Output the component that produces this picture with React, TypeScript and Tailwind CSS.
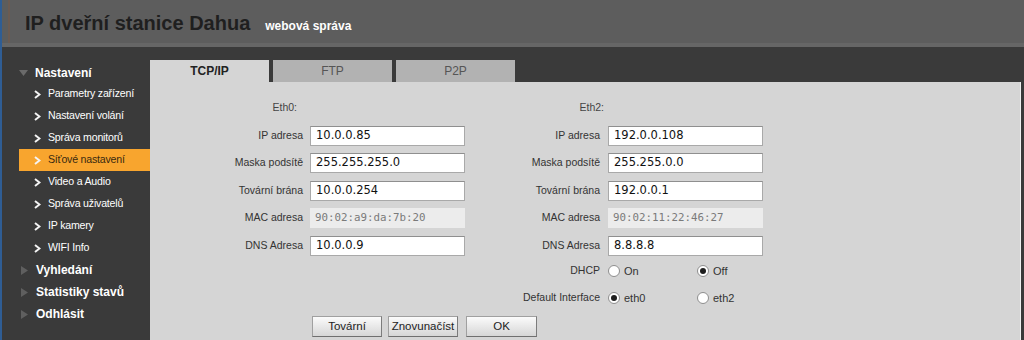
import React from "react";

type Field = { label: string; value: string; readOnly?: boolean };

const eth0: Field[] = [
  { label: "IP adresa", value: "10.0.0.85" },
  { label: "Maska podsítě", value: "255.255.255.0" },
  { label: "Tovární brána", value: "10.0.0.254" },
  { label: "MAC adresa", value: "90:02:a9:da:7b:20", readOnly: true },
  { label: "DNS Adresa", value: "10.0.0.9" },
];

const eth2: Field[] = [
  { label: "IP adresa", value: "192.0.0.108" },
  { label: "Maska podsítě", value: "255.255.0.0" },
  { label: "Tovární brána", value: "192.0.0.1" },
  { label: "MAC adresa", value: "90:02:11:22:46:27", readOnly: true },
  { label: "DNS Adresa", value: "8.8.8.8" },
];

const subItems = [
  "Parametry zařízení",
  "Nastavení volání",
  "Správa monitorů",
  "Síťové nastavení",
  "Video a Audio",
  "Správa uživatelů",
  "IP kamery",
  "WIFI Info",
];

const Chevron = () => (
  <svg width="7" height="9" viewBox="0 0 7 9" className="shrink-0">
    <polyline points="1,1 5.5,4.5 1,8" fill="none" stroke="#f4f4f4" strokeWidth="2" />
  </svg>
);

const Triangle = ({ down }: { down?: boolean }) => (
  <svg width="9" height="9" viewBox="0 0 9 9" className="shrink-0">
    {down ? <polygon points="0,2 9,2 4.5,8" fill="#6a6a6a" /> : <polygon points="1,0 8,4.5 1,9" fill="#5f5f5f" />}
  </svg>
);

const Radio = ({ checked, label }: { checked?: boolean; label: string }) => (
  <div className="flex items-center gap-[4px]">
    <span className="w-[12px] h-[12px] rounded-full bg-white border border-[#8e8e8e] flex items-center justify-center">
      {checked && <span className="w-[6px] h-[6px] rounded-full bg-[#1e1e1e]" />}
    </span>
    <span className="text-[11px] text-[#333]">{label}</span>
  </div>
);

const Input = ({ value, readOnly }: { value: string; readOnly?: boolean }) =>
  readOnly ? (
    <div className="h-[20px] bg-[#ececec] pl-[5px] flex items-center font-['DejaVu_Sans_Mono',monospace] text-[10.8px] text-[#7a7a7a]">
      {value}
    </div>
  ) : (
    <div className="h-[20px] bg-white border border-[#a9a9a9] border-t-[#8f8f8f] pl-[5px] flex items-center font-['DejaVu_Sans',sans-serif] text-[11.5px] text-[#111]">
      {value}
    </div>
  );

const Button = ({ label, w }: { label: string; w: string }) => (
  <div
    className={`${w} h-[21px] flex items-center justify-center text-[11.5px] text-[#222] bg-gradient-to-b from-[#fbfbfb] to-[#d6d6d6] border border-[#a0a0a0] border-b-[#6f6f6f] border-r-[#7c7c7c]`}
  >
    {label}
  </div>
);

export default function App() {
  const cols = "grid grid-cols-[160px_155px_143px_155px] items-center";
  return (
    <div className="w-[1024px] h-[340px] overflow-hidden flex bg-[#3a3a3a] font-['Liberation_Sans',Arial,sans-serif]">
      <div className="w-[2px] bg-[#2f5d94]" />
      <div className="flex-1 flex flex-col">
        {/* header */}
        <div className="h-[47px] bg-[#5d5d5d] border-b-4 border-[#666666] flex shrink-0">
          <div className="ml-[6px] border-l-2 border-[#6b5b52] pl-[15px] pt-[12px] flex items-baseline">
            <span className="text-[20px] leading-[23px] font-bold text-[#1f1f1f]">IP dveřní stanice Dahua</span>
            <span className="ml-[15px] text-[12px] font-bold text-white">webová správa</span>
          </div>
        </div>

        <div className="flex-1 flex">
          {/* sidebar */}
          <div className="w-[148px] pt-[15px] flex flex-col">
            <div className="h-[21px] pl-[17px] flex items-center gap-[7px]">
              <Triangle down />
              <span className="text-[12px] font-bold text-white">Nastavení</span>
            </div>
            {subItems.map((item) => {
              const active = item === "Síťové nastavení";
              return (
                <div
                  key={item}
                  className={`ml-[17px] h-[22px] pl-[15px] flex items-center gap-[7px] ${active ? "bg-[#f8a52e]" : ""}`}
                >
                  <Chevron />
                  <span className={`text-[10.6px] tracking-[-0.2px] ${active ? "text-[#3a2a10]" : "text-white"}`}>{item}</span>
                </div>
              );
            })}
            {["Vyhledání", "Statistiky stavů", "Odhlásit"].map((item) => (
              <div key={item} className="h-[22px] pl-[18px] flex items-center gap-[7px]">
                <Triangle />
                <span className="text-[12px] font-bold text-white">{item}</span>
              </div>
            ))}
          </div>

          {/* content */}
          <div className="flex-1 flex flex-col pt-[13px] pr-[3px]">
            <div className="h-[22px] flex gap-[4px] shrink-0">
              <div className="w-[119px] bg-[#d5d5d5] flex items-center justify-center text-[12px] font-bold text-[#222]">TCP/IP</div>
              <div className="w-[119px] bg-[#b2b2b2] flex items-center justify-center text-[12px] text-[#555]">FTP</div>
              <div className="w-[119px] bg-[#b2b2b2] flex items-center justify-center text-[12px] text-[#555]">P2P</div>
            </div>
            <div className="flex-1 bg-[#d5d5d5] border-r border-[#efefef] pt-[16px]">
              <div className={`${cols} gap-y-[7.5px] text-[10.5px] text-[#333]`}>
                <div className="h-[20px] flex items-center justify-end pr-[13px] text-[#444]">Eth0:</div>
                <div />
                <div className="h-[20px] flex items-center justify-end pr-[4px] text-[#444]">Eth2:</div>
                <div />
                {eth0.map((f, i) => (
                  <React.Fragment key={f.label}>
                    <div className="text-right pr-[7px]">{f.label}</div>
                    <Input value={f.value} readOnly={f.readOnly} />
                    <div className="text-right pr-[8px]">{eth2[i].label}</div>
                    <Input value={eth2[i].value} readOnly={eth2[i].readOnly} />
                  </React.Fragment>
                ))}
              </div>

              <div className={`${cols} mt-[5.5px] gap-y-[7px] text-[10.5px] text-[#333]`}>
                <div />
                <div />
                <div className="h-[20px] flex items-center justify-end pr-[8px]">DHCP</div>
                <div className="flex items-center">
                  <div className="w-[89px]">
                    <Radio label="On" />
                  </div>
                  <Radio checked label="Off" />
                </div>
                <div />
                <div />
                <div className="h-[20px] flex items-center justify-end pr-[8px]">Default Interface</div>
                <div className="flex items-center">
                  <div className="w-[89px]">
                    <Radio checked label="eth0" />
                  </div>
                  <Radio label="eth2" />
                </div>
              </div>

              <div className="mt-[8px] ml-[162px] flex">
                <Button label="Tovární" w="w-[70px]" />
                <div className="w-[6px]" />
                <Button label="Znovunačíst" w="w-[70px]" />
                <div className="w-[8px]" />
                <Button label="OK" w="w-[71px]" />
              </div>
            </div>
          </div>
        </div>
      </div>
    </div>
  );
}
